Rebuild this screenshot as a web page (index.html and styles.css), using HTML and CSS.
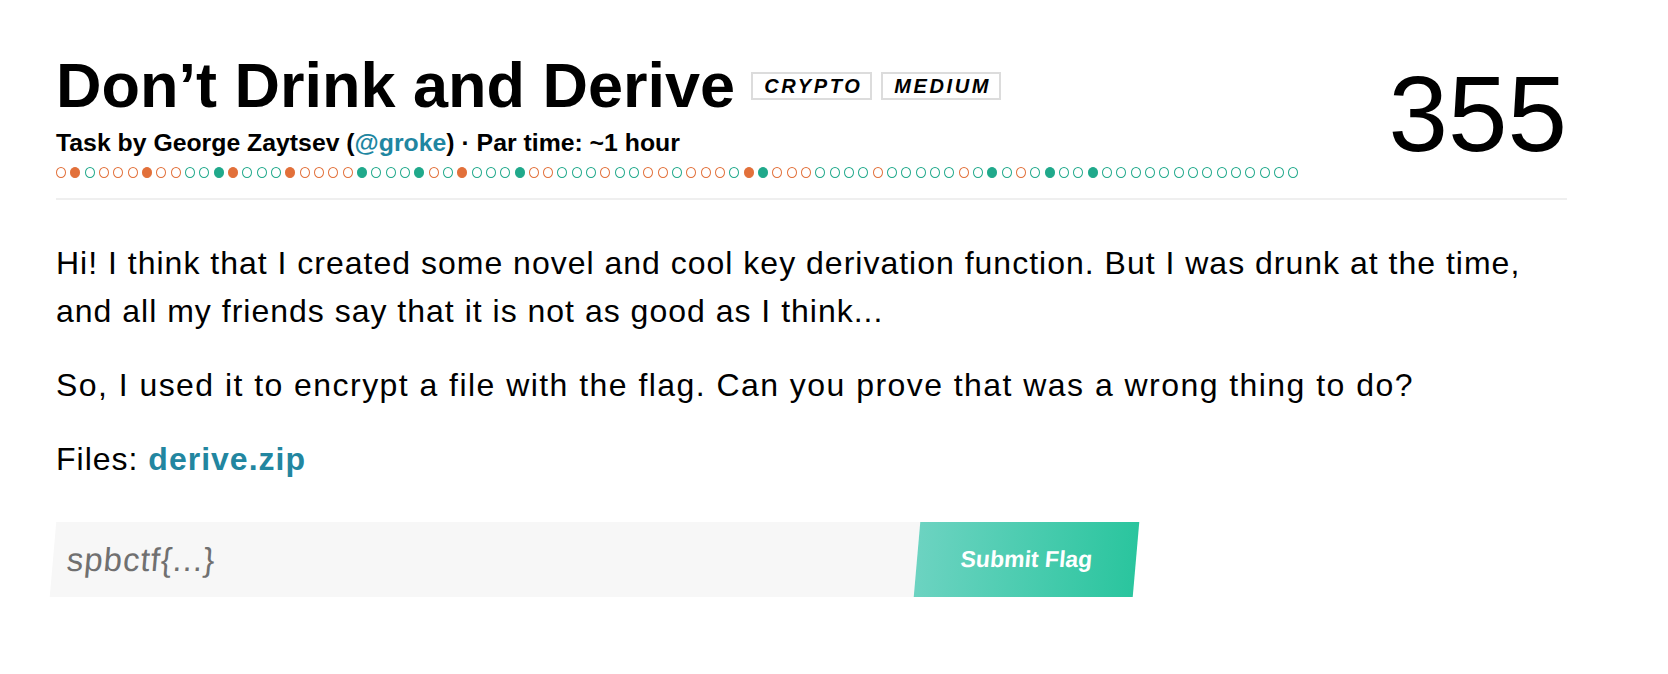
FILE: index.html
```html
<!DOCTYPE html>
<html lang="en">
<head>
<meta charset="utf-8">
<title>Don’t Drink and Derive</title>
<link rel="stylesheet" href="styles.css">
</head>
<body>
<div class="page">
  <header class="task-head">
    <div class="head-main">
      <h1 class="title"><span class="title-text">Don’t Drink and Derive</span><span class="badge">CRYPTO</span><span class="badge">MEDIUM</span></h1>
      <p class="meta">Task by George Zaytsev (<a class="link" href="#">@groke</a>) · Par time: ~1 hour</p>
      <div class="dots">
        <span class="dot r"></span><span class="dot rf"></span><span class="dot g"></span><span class="dot r"></span><span class="dot r"></span><span class="dot r"></span><span class="dot rf"></span><span class="dot r"></span><span class="dot r"></span><span class="dot g"></span>
        <span class="dot g"></span><span class="dot gf"></span><span class="dot rf"></span><span class="dot g"></span><span class="dot g"></span><span class="dot g"></span><span class="dot rf"></span><span class="dot r"></span><span class="dot r"></span><span class="dot r"></span>
        <span class="dot r"></span><span class="dot gf"></span><span class="dot g"></span><span class="dot g"></span><span class="dot g"></span><span class="dot gf"></span><span class="dot r"></span><span class="dot g"></span><span class="dot rf"></span><span class="dot g"></span>
        <span class="dot g"></span><span class="dot g"></span><span class="dot gf"></span><span class="dot r"></span><span class="dot r"></span><span class="dot g"></span><span class="dot g"></span><span class="dot g"></span><span class="dot r"></span><span class="dot g"></span>
        <span class="dot g"></span><span class="dot r"></span><span class="dot r"></span><span class="dot g"></span><span class="dot r"></span><span class="dot r"></span><span class="dot r"></span><span class="dot g"></span><span class="dot rf"></span><span class="dot gf"></span>
        <span class="dot r"></span><span class="dot r"></span><span class="dot r"></span><span class="dot g"></span><span class="dot g"></span><span class="dot g"></span><span class="dot g"></span><span class="dot r"></span><span class="dot g"></span><span class="dot g"></span>
        <span class="dot g"></span><span class="dot g"></span><span class="dot g"></span><span class="dot r"></span><span class="dot g"></span><span class="dot gf"></span><span class="dot g"></span><span class="dot r"></span><span class="dot g"></span><span class="dot gf"></span>
        <span class="dot g"></span><span class="dot g"></span><span class="dot gf"></span><span class="dot g"></span><span class="dot g"></span><span class="dot g"></span><span class="dot g"></span><span class="dot g"></span><span class="dot g"></span><span class="dot g"></span>
        <span class="dot g"></span><span class="dot g"></span><span class="dot g"></span><span class="dot g"></span><span class="dot g"></span><span class="dot g"></span><span class="dot g"></span>
      </div>
    </div>
    <div class="points">355</div>
  </header>

  <div class="desc">
    <p>Hi! I think that I created some novel and cool key derivation function. But I was drunk at the time, and all my friends say that it is not as good as I think...</p>
    <p class="wide">So, I used it to encrypt a file with the flag. Can you prove that was a wrong thing to do?</p>
    <p>Files: <a class="file" href="#">derive.zip</a></p>
  </div>

  <form class="flag-form" onsubmit="return false">
    <input class="flag-input" type="text" placeholder="spbctf{...}">
    <button class="flag-submit" type="submit">Submit Flag</button>
  </form>
</div>
</body>
</html>
```

FILE: styles.css
```css
body {
  margin: 0;
  background: #ffffff;
  color: #000000;
  font-family: "Liberation Sans", Arial, sans-serif;
}

.page {
  width: 1511px;
  margin-left: 56px;
  padding-top: 50px;
}

.task-head {
  display: flex;
  justify-content: space-between;
  align-items: flex-start;
  padding-bottom: 20.5px;
  border-bottom: 2px solid #efefef;
}

.title {
  margin: 0;
  display: flex;
  align-items: flex-start;
  font-size: 63px;
  line-height: 70px;
  font-weight: 700;
}

.badge {
  box-sizing: border-box;
  height: 28px;
  margin-top: 22px;
  margin-left: 9px;
  padding: 0 8px 0 11px;
  border: 2px solid #dcdcdc;
  font-size: 20px;
  line-height: 24px;
  font-style: italic;
  font-weight: 700;
  letter-spacing: 2.6px;
}

.title-text + .badge {
  margin-left: 16px;
}

.meta {
  margin: 7.5px 0 0;
  font-size: 24.8px;
  line-height: 30px;
  font-weight: 700;
}

.link {
  color: #1f86a1;
  text-decoration: none;
}

.dots {
  display: flex;
  gap: 4.33px;
  margin-top: 9px;
}

.dot {
  box-sizing: border-box;
  width: 10px;
  height: 11px;
  border-radius: 50%;
  border: 1.6px solid;
}

.r { border-color: #e2703a; }
.rf { border-color: #e2703a; background: #e2703a; }
.g { border-color: #20a98b; }
.gf { border-color: #20a98b; background: #20a98b; }

.points {
  margin-top: 11px;
  font-size: 107px;
  line-height: 107px;
  font-weight: 400;
}

.desc {
  padding-top: 39px;
}

.desc p {
  margin: 0 0 26px;
  font-size: 32px;
  line-height: 48px;
  letter-spacing: 1px;
}

.desc p.wide {
  letter-spacing: 1.45px;
}

.desc p:last-child {
  margin-bottom: 0;
}

.file {
  color: #2286a0;
  font-weight: 700;
  text-decoration: none;
}

.flag-form {
  display: flex;
  width: 1083px;
  height: 75px;
  margin-top: 39px;
  margin-left: -3px;
  transform: skewX(-5deg);
}

.flag-input {
  box-sizing: border-box;
  width: 864px;
  height: 100%;
  border: 0;
  margin: 0;
  padding: 0 0 0 14px;
  background: #f7f7f7;
  font-family: "Liberation Sans", Arial, sans-serif;
  font-size: 33px;
  letter-spacing: 1px;
  color: #333;
  outline: none;
}

.flag-input::placeholder {
  color: #707070;
}

.flag-submit {
  width: 219px;
  height: 100%;
  border: 0;
  margin: 0;
  padding: 0;
  background: linear-gradient(90deg, #6cd3c1, #2ac59e);
  color: #ffffff;
  font-family: "Liberation Sans", Arial, sans-serif;
  font-size: 23px;
  font-weight: 700;
  cursor: pointer;
}
```
